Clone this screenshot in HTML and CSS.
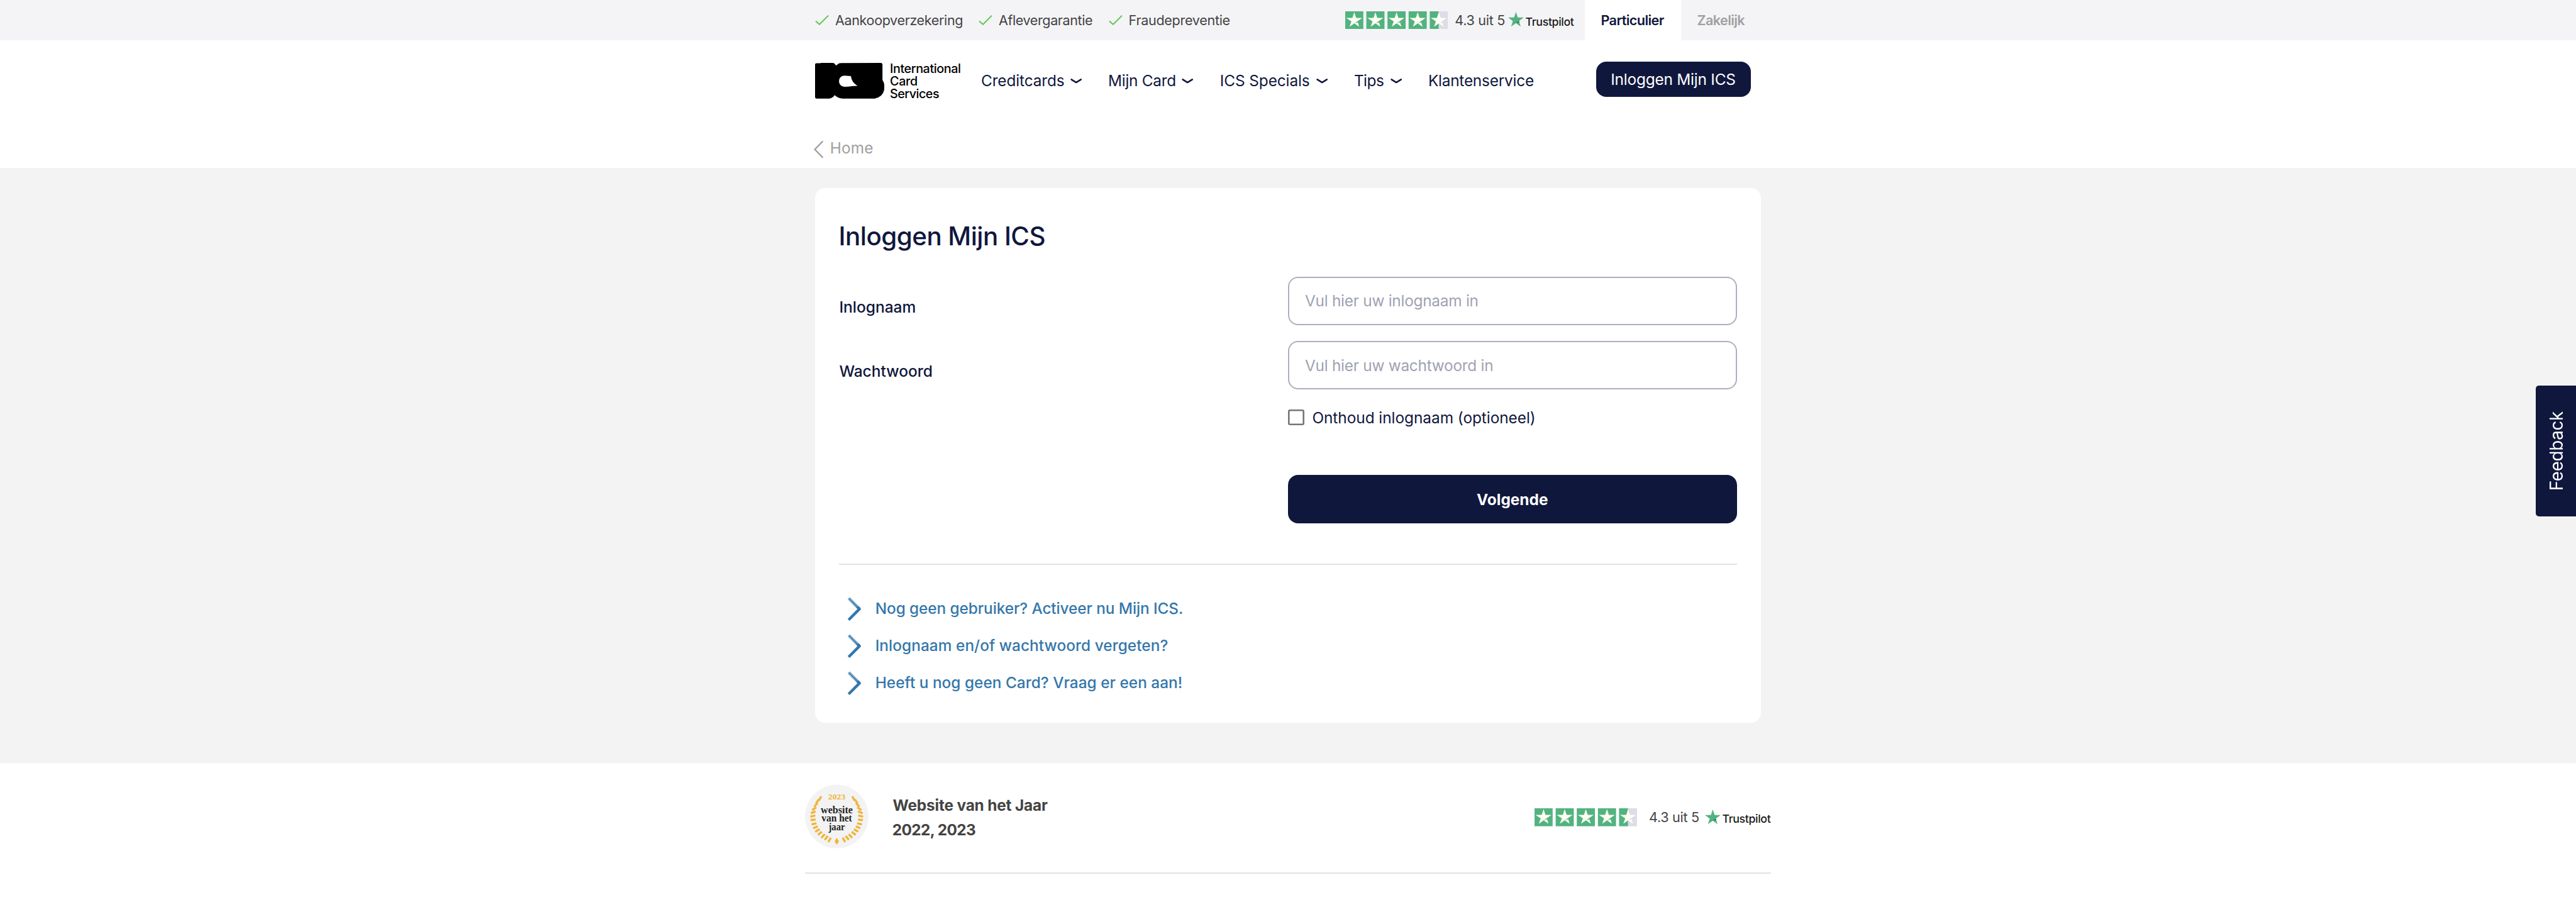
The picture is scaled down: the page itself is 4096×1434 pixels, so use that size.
FILE: index.html
```
<!DOCTYPE html>
<html lang="nl">
<head>
<meta charset="utf-8">
<title>Inloggen Mijn ICS</title>
<link rel="stylesheet" href="styles.css">
</head>
<body>
<svg class="defs" aria-hidden="true">
  <symbol id="check" viewBox="0 0 27 20"><path d="M1 12 L8.500 18.500 L26 1" fill="none" stroke="#68c85a" stroke-width="2.600"/></symbol>
  <symbol id="down" viewBox="0 0 23 10"><path d="M2 1.800 L11.500 7.600 L21 1.800" fill="none" stroke="#10173d" stroke-width="3.200" stroke-linecap="round" stroke-linejoin="round"/></symbol>
  <symbol id="star" viewBox="0 0 36 36">
    <path d="M18 1.700 L21.700 13 H33.700 L8.500 30.700 L12.300 19.900 L2 13 H14.300Z M18 23.800 L25 22 L27.700 30.700Z" fill="#fffef3"/>
  </symbol>
  <symbol id="rating" viewBox="0 0 204 36">
    <path d="M0 0H36V36H0Z M42 0H78V36H42Z M84 0H120V36H84Z M126 0H162V36H126Z M168 0H186V36H168Z" fill="#52b380"/>
    <path d="M186 0H204V36H186Z" fill="#dcdde6"/>
    <use href="#star" width="36" height="36"/><use href="#star" x="42" width="36" height="36"/><use href="#star" x="84" width="36" height="36"/><use href="#star" x="126" width="36" height="36"/><use href="#star" x="168" width="36" height="36"/>
  </symbol>
  <symbol id="tpstar" viewBox="0 0 31 29">
    <path d="M15.500 0 L19.200 11 H31 L21.500 18 L25.100 29 L15.500 22.200 L5.900 29 L9.500 18 L0 11 H11.800Z" fill="#52b380"/>
    <path d="M22.300 20.400 L21.500 18 L15.500 22.200Z" fill="#1d5a3c"/>
  </symbol>
  <symbol id="next" viewBox="38 16 87 145">
    <path d="M48 23 L112 88" fill="none" stroke="#3477ab" stroke-width="17"/>
    <path d="M48 23 L98 74" fill="none" stroke="#fff" stroke-width="12"/>
    <path d="M48 23 L98 74" fill="none" stroke="#3477ab" stroke-width="8"/>
    <path d="M106 80 L113 88 L47 154" fill="none" stroke="#3477ab" stroke-width="17" stroke-linejoin="round"/>
  </symbol>
  <symbol id="leaves" viewBox="0 0 101 101">
    <g stroke="#f0b43c" stroke-width="3.400">
      <path d="M-4 0H4" transform="rotate(43 50.500 50) translate(50.500 11) rotate(19)"/>
      <path d="M-4 0H4" transform="rotate(52 50.500 50) translate(50.500 11) rotate(3)"/>
      <path d="M-4 0H4" transform="rotate(61 50.500 50) translate(50.500 12) rotate(-16)"/>
      <path d="M-4 0H4" transform="rotate(71 50.500 50) translate(50.500 12) rotate(-36)"/>
      <path d="M-4 0H4" transform="rotate(80 50.500 50) translate(50.500 12) rotate(-58)"/>
      <path d="M-4 0H4" transform="rotate(89 50.500 50) translate(50.500 12) rotate(-75)"/>
      <path d="M-4 0H4" transform="rotate(98 50.500 50) translate(50.500 12) rotate(-92)"/>
      <path d="M-4 0H4" transform="rotate(108 50.500 50) translate(50.500 12) rotate(-96)"/>
      <path d="M-4 0H4" transform="rotate(117 50.500 50) translate(50.500 12) rotate(-95)"/>
      <path d="M-4 0H4" transform="rotate(126 50.500 50) translate(50.500 12) rotate(-95)"/>
      <path d="M-4 0H4" transform="rotate(135 50.500 50) translate(50.500 12) rotate(-96)"/>
      <path d="M-4 0H4" transform="rotate(145 50.500 50) translate(50.500 12) rotate(-98)"/>
      <path d="M-4 0H4" transform="rotate(154 50.500 50) translate(50.500 12) rotate(-101)"/>
      <path d="M-4 0H4" transform="rotate(163 50.500 50) translate(50.500 11) rotate(-103)"/>
    </g>
  </symbol>
</svg>

<div class="topbar">
  <ul class="usps">
    <li><svg class="check"><use href="#check"/></svg><span class="t1">Aankoopverzekering</span></li>
    <li><svg class="check"><use href="#check"/></svg><span class="t2">Aflevergarantie</span></li>
    <li><svg class="check"><use href="#check"/></svg><span class="t3">Fraudepreventie</span></li>
  </ul>
  <div class="trust">
    <svg class="rating"><use href="#rating"/></svg>
    <span class="score">4.3 uit 5</span>
    <svg class="tpstar"><use href="#tpstar"/></svg>
    <span class="tp">Trustpilot</span>
  </div>
  <a class="tab active">Particulier</a>
  <a class="tab">Zakelijk</a>
</div>

<header class="header">
  <a class="logo">
    <svg class="mark" viewBox="60 44 414 214"><path fill-rule="evenodd" d="M68 46 L90 46 L96 44 H168 Q178 46 183 57 Q189 61 195 51 Q202 45 214 45 L455 44 Q461 46 462 54 V146 Q474 160 474 192 Q470 245 415 257 H225 Q198 255 176 236 Q168 252 145 257 H70 Q60 256 60 248 V54 Q60 46 68 46Z M236 120 L274 123 Q276 158 313 181 L276 183 Q275 186 236 186 C192 186 192 120 236 120Z"/></svg>
    <span class="logotext"><span class="l1">International</span><span class="l2">Card</span><span class="l3">Services</span></span>
  </a>
  <nav class="nav">
    <a class="n1">Creditcards<svg class="down"><use href="#down"/></svg></a>
    <a class="n2">Mijn Card<svg class="down"><use href="#down"/></svg></a>
    <a class="n3">ICS Specials<svg class="down"><use href="#down"/></svg></a>
    <a class="n4">Tips<svg class="down"><use href="#down"/></svg></a>
    <a class="n5">Klantenservice</a>
  </nav>
  <a class="login">Inloggen Mijn ICS</a>
</header>

<div class="crumb">
  <svg class="back" viewBox="0 0 20 36"><path d="M18 1.500 L2 18 L18 34.500" fill="none" stroke="#a0a0a0" stroke-width="3"/></svg>
  <a>Home</a>
</div>

<main class="main">
  <section class="card">
    <h1>Inloggen Mijn ICS</h1>
    <form class="form">
      <label for="name">Inlognaam</label>
      <input class="field" id="name" type="text" placeholder="Vul hier uw inlognaam in">
      <label for="pass">Wachtwoord</label>
      <input class="field" id="pass" type="password" placeholder="Vul hier uw wachtwoord in">
      <div class="remember"><span class="box"></span><span>Onthoud inlognaam (optioneel)</span></div>
      <button class="submit" type="button">Volgende</button>
    </form>
    <ul class="links">
      <li><svg class="next"><use href="#next"/></svg><a class="k1">Nog geen gebruiker? Activeer nu Mijn ICS.</a></li>
      <li><svg class="next"><use href="#next"/></svg><a class="k2">Inlognaam en/of wachtwoord vergeten?</a></li>
      <li><svg class="next"><use href="#next"/></svg><a class="k3">Heeft u nog geen Card? Vraag er een aan!</a></li>
    </ul>
  </section>
</main>

<footer class="footer">
  <svg class="badge" viewBox="0 0 101 101">
    <circle cx="50.500" cy="50" r="50.500" fill="#f3f3f3"/>
    <use href="#leaves" width="101" height="101"/>
    <use href="#leaves" width="101" height="101" transform="translate(101 0) scale(-1 1)"/>
    <path d="M50.500 84 L54 89.500 L50.500 95 L47 89.500Z" fill="#f0b43c"/>
    <g class="badgetext" text-anchor="middle">
      <text class="year" x="50.500" y="23" textLength="27.500" lengthAdjust="spacingAndGlyphs">2023</text>
      <text x="50.500" y="44.500" textLength="51" lengthAdjust="spacingAndGlyphs">website</text>
      <text x="50.500" y="58.400" textLength="48.500" lengthAdjust="spacingAndGlyphs">van het</text>
      <text x="50.500" y="72" textLength="26" lengthAdjust="spacingAndGlyphs">jaar</text>
    </g>
  </svg>
  <p class="award"><span class="a1">Website van het Jaar</span><span class="a2">2022, 2023</span></p>
  <div class="trust">
    <svg class="rating"><use href="#rating"/></svg>
    <span class="score">4.3 uit 5</span>
    <svg class="tpstar"><use href="#tpstar"/></svg>
    <span class="tp">Trustpilot</span>
  </div>
</footer>

<a class="feedback"><span>Feedback</span></a>
</body>
</html>
```
FILE: styles.css
```
* { box-sizing: border-box; }
body { margin: 0; height: 1434px; overflow: hidden; background: #fff; color: #10173d; font: 400 24.4px/30px Inter, "Liberation Sans", sans-serif; white-space: nowrap; }
ul, p, h1 { margin: 0; padding: 0; list-style: none; }
svg { display: block; flex: none; }
.defs { position: absolute; width: 0; height: 0; }

.topbar { display: flex; align-items: center; height: 64px; padding-left: 1296px; background: #f4f4f7; font-size: 21.6px; color: #444; }
.usps { display: grid; grid-template-columns: 260px 206.6px 376px; }
.usps li { display: flex; align-items: center; }
.check { width: 22px; height: 16px; margin-right: 10px; }
.t1 { letter-spacing: -.39px; }
.t2 { letter-spacing: -.43px; }
.t3 { letter-spacing: -.32px; }
.trust { display: flex; align-items: center; font-size: 21.6px; color: #444; }
.rating { width: 163.2px; height: 28.8px; }
.score { width: 85px; margin-left: 11.500px; letter-spacing: -.3px; }
.tpstar { width: 24.8px; height: 23.2px; margin-top: -2px; }
.tp { margin-left: 2.500px; padding-top: 5px; font-size: 17.8px; font-weight: 500; letter-spacing: -.36px; color: #191919; }
.topbar .trust { width: 381.4px; }
.tab { width: 153px; height: 64px; line-height: 64px; padding-left: 25.5px; font-weight: 600; letter-spacing: -.6px; color: #a0a0a0; }
.tab.active { background: #fff; color: #10173d; }

.header { display: flex; height: 136px; padding: 34.4px 0 0 1296px; }
.logo { display: flex; width: 264px; color: #000; }
.mark { width: 110.4px; height: 57.1px; margin-top: 1.3px; }
.logotext { display: flex; flex-direction: column; margin-left: 8.6px; padding-top: .6px; font-size: 19.8px; font-weight: 500; line-height: 20.2px; }
.l1 { letter-spacing: -.44px; }
.l2 { letter-spacing: -.34px; }
.l3 { letter-spacing: -.54px; }
.nav { display: grid; grid-template-columns: 202px 177.8px 213.1px 118px 266.9px; height: 60px; }
.nav a { display: flex; justify-content: space-between; align-items: center; padding-right: 42px; }
.down { width: 18.4px; height: 8px; margin-top: 2px; }
.n1 { letter-spacing: -.12px; }
.n2 { letter-spacing: -.26px; }
.n3 { letter-spacing: -.1px; }
.n4 { letter-spacing: -.53px; }
.n5 { letter-spacing: -.23px; }
.login { width: 246.4px; height: 55.2px; line-height: 56px; padding-left: 23.5px; border-radius: 16px; background: #10173d; color: #fff; letter-spacing: -.21px; }

.crumb { display: flex; align-items: center; height: 67.2px; padding: 2px 0 0 1294px; color: #a0a0a0; }
.back { width: 16px; height: 29px; margin: 6px 9.7px 0 0; }
.crumb a { letter-spacing: .19px; }

.main { height: 945.6px; padding: 32px 1296px 0; background: #f3f3f3; }
.card { width: 1504px; height: 849.6px; padding: 52px 38.4px 0; border-radius: 16px; background: #fff; }
h1 { font-size: 40.4px; line-height: 50px; font-weight: 540; letter-spacing: -.55px; margin-left: -.8px; }
.form { display: grid; grid-template-columns: 713.6px 713.6px; grid-template-rows: 76.8px 76.8px; row-gap: 25.6px; height: 458px; margin-top: 38.8px; border-bottom: 2px solid #e3e3e3; align-content: start; }
.form label { padding-top: 33px; font-size: 24.6px; font-weight: 540; letter-spacing: -.05px; }
.field { width: 713.6px; height: 76.8px; padding: 0 0 0 25px; border: 2px solid #adafbe; border-radius: 16px; outline: 0; background: #fff; font: inherit; letter-spacing: -.26px; }
.field::placeholder { color: #9fa2b3; opacity: 1; }
.remember { grid-column: 2; display: flex; align-items: center; height: 30px; margin-top: 3.8px; letter-spacing: -.04px; }
.box { width: 25.6px; height: 25.6px; margin-right: 12.8px; border-radius: 3px; box-shadow: inset 0 0 0 2.6px #767676; }
.submit { grid-column: 2; height: 76.8px; margin-top: 35.6px; padding: 0; border: 0; border-radius: 16px; background: #10173d; color: #fff; font: inherit; font-weight: 700; }
.submit { margin-top: 51px; }
.links { padding-top: 40.4px; color: #3477ab; font-weight: 530; }
.links li { display: flex; align-items: center; height: 59.2px; padding-left: 12.2px; }
.links a { padding-bottom: 2px; }
.next { width: 22.8px; height: 38.6px; margin: 0 22.3px 0 0; }
.k1 { letter-spacing: -.1px; }
.k2 { letter-spacing: .05px; }
.k3 { letter-spacing: .01px; }

.footer { display: flex; width: 1536px; height: 176.6px; margin-left: 1280px; padding-top: 35.2px; border-bottom: 2px solid #e3e3e3; }
.badge { width: 101px; height: 101px; }
.badgetext { font: 700 16.500px "Liberation Serif", serif; fill: #222; }
.badgetext .year { font-size: 13.5px; fill: #f0b43c; }
.award { display: flex; flex-direction: column; width: 1020.6px; margin-left: 38.6px; padding-top: 13.2px; line-height: 38.4px; font-weight: 700; color: #444; }
.a1 { letter-spacing: -.18px; }
.a2 { letter-spacing: -.63px; margin-left: -.8px; }
.footer .trust { height: 102.4px; }
.footer .score { width: 89.2px; margin-left: 18.6px; }

.feedback { position: fixed; right: 0; top: 612.8px; display: flex; align-items: center; justify-content: center; width: 64px; height: 207.8px; border-radius: 5px 0 0 5px; background: #10173d; color: #fff; font-size: 27.8px; letter-spacing: -.32px; }
.feedback span { writing-mode: vertical-rl; transform: rotate(180deg); line-height: 64px; padding-right: 1px; }
```
